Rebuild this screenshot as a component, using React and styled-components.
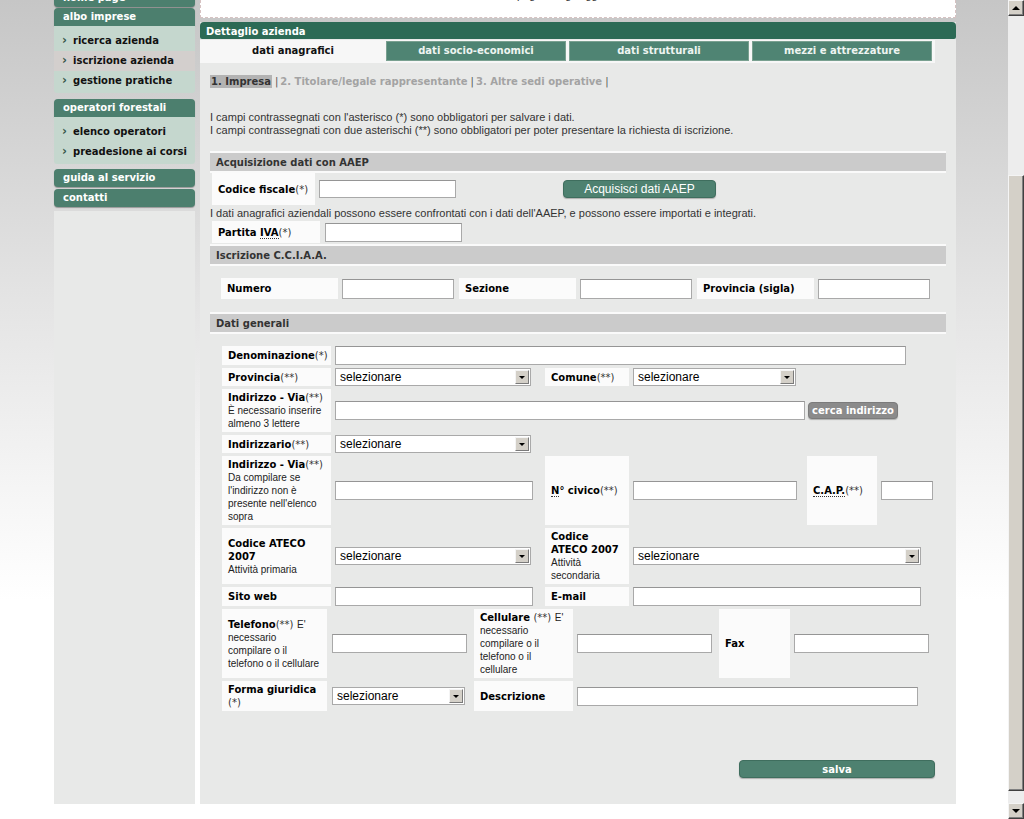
import React from 'react';
import styled, { createGlobalStyle } from 'styled-components';

const verdana = `"DejaVu Sans", Verdana, sans-serif`;
const arial = `"Liberation Sans", Arial, Helvetica, sans-serif`;

const GlobalStyle = createGlobalStyle`
  html, body {
    margin: 0;
    padding: 0;
    overflow: hidden;
    background: #fff;
  }
`;

// page frame
const Viewport = styled.div`
  display: flex;
  width: 1024px;
  height: 819px;
  overflow: hidden;
`;

const Page = styled.div`
  flex: 1;
  overflow: hidden;
  background: linear-gradient(180deg, #c6c6c6 0px, #e4e4e4 300px, #ffffff 600px);
`;

const Columns = styled.div`
  display: flex;
  align-items: stretch;
  gap: 5px;
  margin-top: -20px;
  padding-left: 54px;
`;

// fake browser scrollbar
const Scrollbar = styled.div`
  width: 16px;
  display: flex;
  flex-direction: column;
  background: #ededed;
`;

const ScrollArrow = styled.div`
  height: 16px;
  box-sizing: border-box;
  background: #d4d0c8;
  border: 1px solid;
  border-color: #f4f4f4 #404040 #404040 #f4f4f4;
  box-shadow: inset -1px -1px 0 #808080;
  display: flex;
  align-items: center;
  justify-content: center;

  &::after {
    content: '';
    border-left: 4px solid transparent;
    border-right: 4px solid transparent;
    ${(p) => (p.$down ? 'border-top: 4px solid #000;' : 'border-bottom: 4px solid #000;')}
  }
`;

const ScrollSpace = styled.div`
  height: ${(p) => p.$h}px;
  flex: ${(p) => (p.$grow ? 1 : 'none')};
`;

const ScrollThumb = styled.div`
  height: 616px;
  box-sizing: border-box;
  background: #d4d0c8;
  border: 1px solid;
  border-color: #f4f4f4 #404040 #404040 #f4f4f4;
  box-shadow: inset -1px -1px 0 #808080;
`;

// left menu
const Sidebar = styled.nav`
  width: 141px;
  display: flex;
  flex-direction: column;
  padding-top: 9px;
`;

const MenuHeader = styled.div`
  height: 18px;
  line-height: 18px;
  margin-top: ${(p) => p.$gap || 0}px;
  padding-left: 9px;
  background: #4c7f6e;
  border-radius: ${(p) => (p.$open ? '4px 4px 0 0' : '4px')};
  box-shadow: 0 1px 1px rgba(0, 0, 0, 0.3);
  color: #fff;
  font-family: ${verdana};
  font-size: 10px;
  font-weight: bold;
  white-space: nowrap;
`;

const SubMenu = styled.ul`
  list-style: none;
  margin: 0;
  padding: 5px 0 2px;
  background: #c5d7ce;
  border-radius: 0 0 3px 3px;
`;

const SubItem = styled.li`
  height: 20px;
  line-height: 20px;
  padding-left: 8px;
  font-family: ${verdana};
  font-size: 10px;
  font-weight: bold;
  color: #111;
  background: ${(p) => (p.$active ? '#d3cfcd' : 'transparent')};
  white-space: nowrap;

  &::before {
    content: '›';
    display: inline-block;
    width: 11px;
    font-size: 12px;
    line-height: 16px;
    color: #38574c;
  }
`;

const SideFill = styled.div`
  flex: 1;
  margin-top: 4px;
  background: #e8e9e8;
`;

// main area
const Main = styled.main`
  width: 756px;
  display: flex;
  flex-direction: column;
`;

const NoticeBox = styled.div`
  height: 38px;
  box-sizing: border-box;
  padding: 8px 0 0 168px;
  background: #fff;
  border: 1px dashed #d6c2c2;
  font: 11px ${arial};
  color: #333;
`;

const Panel = styled.section`
  flex: 1;
  margin-top: 4px;
  padding-bottom: 26px;
  background: #e8e9e8;
`;

const PanelTitle = styled.h2`
  margin: 0;
  height: 17px;
  box-sizing: border-box;
  padding: 2px 0 0 6px;
  line-height: 15px;
  background: #2c6a55;
  border-radius: 4px 4px 2px 2px;
  color: #fff;
  font-family: ${verdana};
  font-size: 10px;
  font-weight: bold;
`;

const TabStrip = styled.div`
  display: grid;
  grid-template-columns: repeat(4, 180px);
  column-gap: 3px;
  width: max-content;
  margin-top: 1px;
  padding: 1px 3px 2px;
  background: #f7f7f7;
`;

const Tab = styled.div`
  height: 20px;
  box-sizing: border-box;
  text-align: center;
  font: bold 10px/18px ${verdana};
  background: ${(p) => (p.$active ? 'transparent' : '#4f8473')};
  border: 1px solid ${(p) => (p.$active ? 'transparent' : '#79a090')};
  color: ${(p) => (p.$active ? '#111' : '#eef4f1')};
`;

const Body = styled.div`
  padding: 0 10px;
`;

const SubNav = styled.div`
  margin-top: 12px;
  height: 13px;
  font: bold 10px/13px ${verdana};
  color: #a3a3a3;
  white-space: nowrap;
`;

const Current = styled.span`
  background: #b3b3b3;
  color: #333;
  padding: 1px 1px;
`;

const Sep = styled.span`
  font-weight: normal;
  color: #555;
  margin: 0 2px 0 3px;
`;

const Notes = styled.p`
  margin: 23px 0 0;
  font: 11px/13px ${arial};
  color: #333;
`;

const SectionHeader = styled.h3`
  margin: ${(p) => p.$mt || 0}px 0 0;
  height: 18px;
  padding-left: 6px;
  background: #cbcbcb;
  border-top: 2px solid #fafafa;
  border-bottom: 2px solid #fafafa;
  font: bold 10px/19px ${verdana};
  color: #333;
`;

const FormRow = styled.div`
  display: flex;
  align-items: center;
  margin: ${(p) => p.$mt || 0}px 0 0 ${(p) => p.$ml || 0}px;
`;

const InfoLine = styled.div`
  margin-top: 2px;
  font: 11px/13px ${arial};
  color: #333;
`;

const LabelCell = styled.div`
  display: flex;
  align-items: center;
  box-sizing: border-box;
  width: ${(p) => (p.$w ? `${p.$w}px` : 'auto')};
  min-height: ${(p) => p.$h || 17}px;
  margin-right: ${(p) => p.$mr || 0}px;
  padding: 2px 6px;
  background: #fbfbfb;
  font: bold 10px/13px ${verdana};
  color: #000;
  white-space: nowrap;
`;

const Req = styled.span`
  font-weight: normal;
  color: #333;
`;

const Hint = styled.span`
  font: 10px/13px ${arial};
  color: #222;
`;

const Abbr = styled.abbr`
  text-decoration: none;
  border-bottom: 1px dotted #333;
`;

const TextInput = styled.input`
  box-sizing: border-box;
  width: ${(p) => p.$w}px;
  height: ${(p) => p.$h || 19}px;
  margin: 0 ${(p) => p.$mr || 0}px 0 ${(p) => p.$ml || 0}px;
  padding: 0 3px;
  border: 1px solid #a9a9a9;
  border-top-color: #959595;
  background: #fff;
  font: 12px ${arial};
  outline: none;
`;

const Select = styled.div`
  display: flex;
  align-items: center;
  justify-content: space-between;
  box-sizing: border-box;
  width: ${(p) => p.$w}px;
  height: 18px;
  margin-left: ${(p) => p.$ml || 0}px;
  padding-left: 4px;
  border: 1px solid #a9a9a9;
  background: #fff;
  font: 12px ${arial};
  color: #000;
`;

const SelectArrow = styled.span`
  display: flex;
  align-items: center;
  justify-content: center;
  box-sizing: border-box;
  width: 14px;
  height: 14px;
  margin-right: 1px;
  background: #d4d0c8;
  border: 1px solid;
  border-color: #f4f4f4 #7a7a7a #7a7a7a #f4f4f4;

  &::after {
    content: '';
    border-left: 3px solid transparent;
    border-right: 3px solid transparent;
    border-top: 3px solid #000;
  }
`;

const Button = styled.button`
  box-sizing: border-box;
  width: ${(p) => p.$w}px;
  height: ${(p) => p.$h || 18}px;
  margin-left: ${(p) => p.$ml || 0}px;
  padding: 0;
  border-radius: 4px;
  border: 1px solid ${(p) => (p.$gray ? '#7b7b7b' : '#3f6e5e')};
  background: ${(p) => (p.$gray ? '#8b8b8b' : '#4e8170')};
  box-shadow: 0 1px 1px rgba(0, 0, 0, 0.25);
  color: #fff;
  font: ${(p) => (p.$plain ? `12px ${arial}` : `bold 10px ${verdana}`)};
  cursor: pointer;
`;

const Grid = styled.div`
  display: grid;
  grid-template-columns: ${(p) => p.$cols};
  column-gap: 4px;
  row-gap: 3px;
  margin: ${(p) => p.$mt || 0}px 0 0 12px;
`;

const ValueCell = styled.div`
  display: flex;
  align-items: center;
  grid-column: span ${(p) => p.$span || 1};
`;

const SaveRow = styled.div`
  display: flex;
  justify-content: flex-end;
  margin-top: 49px;
  padding-right: 11px;
`;

const Dropdown = ({ w, ml }) => (
  <Select $w={w} $ml={ml}>
    selezionare
    <SelectArrow />
  </Select>
);

const tabs = ['dati anagrafici', 'dati socio-economici', 'dati strutturali', 'mezzi e attrezzature'];

const App = () => {
  return (
    <Viewport>
      <GlobalStyle />
      <Page>
        <Columns>
          <Sidebar>
            <MenuHeader>home page</MenuHeader>
            <MenuHeader $gap={1} $open>albo imprese</MenuHeader>
            <SubMenu>
              <SubItem>ricerca azienda</SubItem>
              <SubItem $active>iscrizione azienda</SubItem>
              <SubItem>gestione pratiche</SubItem>
            </SubMenu>
            <MenuHeader $gap={6} $open>operatori forestali</MenuHeader>
            <SubMenu>
              <SubItem>elenco operatori</SubItem>
              <SubItem>preadesione ai corsi</SubItem>
            </SubMenu>
            <MenuHeader $gap={5}>guida al servizio</MenuHeader>
            <MenuHeader $gap={2}>contatti</MenuHeader>
            <SideFill />
          </Sidebar>

          <Main>
            <NoticeBox>Per informazioni consultare la pagina degli aggiornamenti</NoticeBox>
            <Panel>
              <PanelTitle>Dettaglio azienda</PanelTitle>
              <TabStrip>
                {tabs.map((t, i) => (
                  <Tab key={t} $active={i === 0}>{t}</Tab>
                ))}
              </TabStrip>

              <Body>
                <SubNav>
                  <Current>1. Impresa</Current>
                  <Sep>|</Sep>2. Titolare/legale rappresentante
                  <Sep>|</Sep>3. Altre sedi operative
                  <Sep>|</Sep>
                </SubNav>

                <Notes>
                  I campi contrassegnati con l'asterisco (*) sono obbligatori per salvare i dati.
                  <br />
                  I campi contrassegnati con due asterischi (**) sono obbligatori per poter presentare la richiesta di iscrizione.
                </Notes>

                <SectionHeader $mt={14}>Acquisizione dati con AAEP</SectionHeader>
                <FormRow $ml={2}>
                  <LabelCell $w={103} $h={32}>
                    <div>Codice fiscale<Req>(*)</Req></div>
                  </LabelCell>
                  <TextInput $w={137} $h={18} $ml={4} />
                  <Button $w={153} $ml={107} $plain>Acquisisci dati AAEP</Button>
                </FormRow>
                <InfoLine>
                  I dati anagrafici aziendali possono essere confrontati con i dati dell'AAEP, e possono essere importati e integrati.
                </InfoLine>
                <FormRow $ml={2} $mt={1}>
                  <LabelCell $w={108} $h={22}>
                    <div>Partita <Abbr>IVA</Abbr><Req>(*)</Req></div>
                  </LabelCell>
                  <TextInput $w={137} $ml={5} />
                </FormRow>

                <SectionHeader $mt={1}>Iscrizione C.C.I.A.A.</SectionHeader>
                <FormRow $ml={11} $mt={12}>
                  <LabelCell $w={117} $h={21} $mr={4}>Numero</LabelCell>
                  <TextInput $w={112} $h={20} $mr={5} />
                  <LabelCell $w={117} $h={21} $mr={4}>Sezione</LabelCell>
                  <TextInput $w={112} $h={20} $mr={5} />
                  <LabelCell $w={117} $h={21} $mr={4}>Provincia (sigla)</LabelCell>
                  <TextInput $w={112} $h={20} />
                </FormRow>

                <SectionHeader $mt={13}>Dati generali</SectionHeader>
                <Grid $cols="109px 206px 84px 170px 70px 54px" $mt={12}>
                  <LabelCell><div>Denominazione<Req>(*)</Req></div></LabelCell>
                  <ValueCell $span={5}><TextInput $w={571} /></ValueCell>

                  <LabelCell><div>Provincia<Req>(**)</Req></div></LabelCell>
                  <ValueCell><Dropdown w={196} /></ValueCell>
                  <LabelCell><div>Comune<Req>(**)</Req></div></LabelCell>
                  <ValueCell $span={3}><Dropdown w={163} /></ValueCell>

                  <LabelCell>
                    <div>
                      Indirizzo - Via<Req>(**)</Req>
                      <br />
                      <Hint>È necessario inserire<br />almeno 3 lettere</Hint>
                    </div>
                  </LabelCell>
                  <ValueCell $span={5}>
                    <TextInput $w={470} $mr={3} />
                    <Button $gray $w={90} $h={17}>cerca indirizzo</Button>
                  </ValueCell>

                  <LabelCell><div>Indirizzario<Req>(**)</Req></div></LabelCell>
                  <ValueCell $span={5}><Dropdown w={196} /></ValueCell>

                  <LabelCell>
                    <div>
                      Indirizzo - Via<Req>(**)</Req>
                      <br />
                      <Hint>Da compilare se<br />l'indirizzo non è<br />presente nell'elenco<br />sopra</Hint>
                    </div>
                  </LabelCell>
                  <ValueCell><TextInput $w={198} /></ValueCell>
                  <LabelCell><div><Abbr>N</Abbr>° civico<Req>(**)</Req></div></LabelCell>
                  <ValueCell><TextInput $w={164} /></ValueCell>
                  <LabelCell><div><Abbr>C.A.P.</Abbr><Req>(**)</Req></div></LabelCell>
                  <ValueCell><TextInput $w={52} /></ValueCell>

                  <LabelCell>
                    <div>
                      Codice ATECO<br />2007
                      <br />
                      <Hint>Attività primaria</Hint>
                    </div>
                  </LabelCell>
                  <ValueCell><Dropdown w={196} /></ValueCell>
                  <LabelCell>
                    <div>
                      Codice<br />ATECO 2007
                      <br />
                      <Hint>Attività<br />secondaria</Hint>
                    </div>
                  </LabelCell>
                  <ValueCell $span={3}><Dropdown w={288} /></ValueCell>

                  <LabelCell>Sito web</LabelCell>
                  <ValueCell><TextInput $w={198} /></ValueCell>
                  <LabelCell>E-mail</LabelCell>
                  <ValueCell $span={3}><TextInput $w={288} /></ValueCell>
                </Grid>

                <Grid $cols="105px 139px 99px 138px 71px 136px" $mt={3}>
                  <LabelCell>
                    <div>
                      Telefono<Req>(**)</Req> <Hint>E'<br />necessario<br />compilare o il<br />telefono o il cellulare</Hint>
                    </div>
                  </LabelCell>
                  <ValueCell><TextInput $w={135} $ml={1} /></ValueCell>
                  <LabelCell>
                    <div>
                      Cellulare <Req>(**)</Req> <Hint>E'<br />necessario<br />compilare o il<br />telefono o il<br />cellulare</Hint>
                    </div>
                  </LabelCell>
                  <ValueCell><TextInput $w={135} /></ValueCell>
                  <LabelCell>Fax</LabelCell>
                  <ValueCell><TextInput $w={135} /></ValueCell>

                  <LabelCell>
                    <div>Forma giuridica<br /><Req>(*)</Req></div>
                  </LabelCell>
                  <ValueCell><Dropdown w={133} ml={1} /></ValueCell>
                  <LabelCell>Descrizione</LabelCell>
                  <ValueCell $span={3}><TextInput $w={341} /></ValueCell>
                </Grid>

                <SaveRow>
                  <Button $w={196}>salva</Button>
                </SaveRow>
              </Body>
            </Panel>
          </Main>
        </Columns>
      </Page>
      <Scrollbar>
        <ScrollArrow />
        <ScrollSpace $h={159} />
        <ScrollThumb />
        <ScrollSpace $grow />
        <ScrollArrow $down />
      </Scrollbar>
    </Viewport>
  );
};

export default App;
